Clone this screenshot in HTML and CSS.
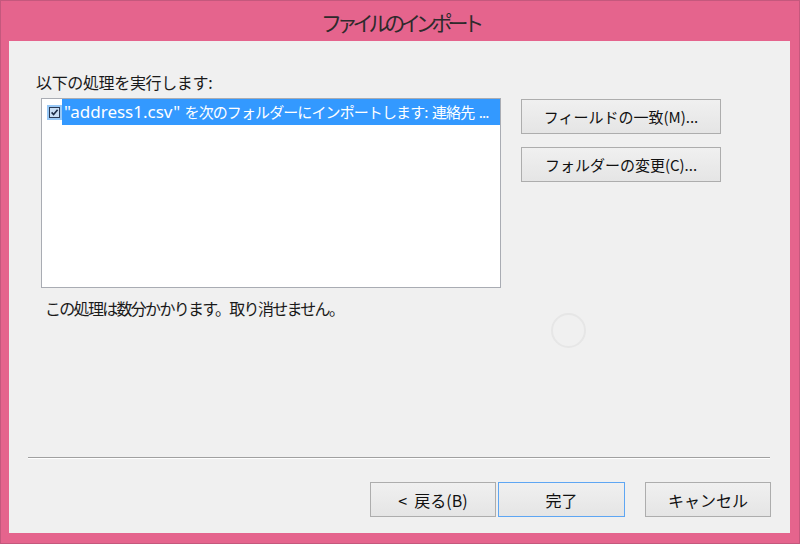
FILE: index.html
```html
<!DOCTYPE html>
<html lang="ja">
<head>
<meta charset="utf-8">
<title>ファイルのインポート</title>
<link rel="stylesheet" href="styles.css">
</head>
<body>
<div class="window">
  <div class="titlebar"><span class="title">ファイルのインポート</span></div>
  <div class="content">
    <div class="main">
      <div class="label">以下の処理を実行します:</div>
      <div class="row">
        <div class="listbox">
          <div class="item">
            <span class="check">
              <svg width="13" height="13" viewBox="0 0 13 13">
                <rect x="1.5" y="1.5" width="10" height="10" fill="#c9def4" stroke="#2a3a55"/>
                <path d="M3.6 6.4 L5.6 8.6 L9.6 3.8" fill="none" stroke="#1d2c46" stroke-width="1.6"/>
              </svg>
            </span>
            <span class="item-text"><span class="fname">"address1.csv"</span> を次のフォルダーにインポートします: 連絡先 ...</span>
          </div>
        </div>
        <div class="side-buttons">
          <button class="btn wide">フィールドの一致(M)...</button>
          <button class="btn wide">フォルダーの変更(C)...</button>
        </div>
      </div>
      <div class="note">この処理は数分かかります。取り消せません。</div>
    </div>
    <div class="spinner"></div>
    <div class="separator"></div>
    <div class="footer">
      <button class="btn back">&lt;&nbsp;&nbsp;戻る(B)</button>
      <button class="btn done">完了</button>
      <button class="btn cancel">キャンセル</button>
    </div>
  </div>
</div>
</body>
</html>
```
FILE: styles.css
```css
html, body {
  margin: 0;
  padding: 0;
}
body {
  width: 800px;
  height: 544px;
  overflow: hidden;
  font-family: "Noto Sans CJK JP", "Noto Sans", sans-serif;
  color: #1a1a1a;
}
.window {
  box-sizing: border-box;
  width: 800px;
  height: 544px;
  background: #e5648d;
  border: 1px solid #c4587d;
  display: flex;
  flex-direction: column;
}
.titlebar {
  height: 40px;
  display: flex;
  align-items: center;
  justify-content: center;
}
.title {
  font-size: 21px;
  letter-spacing: -5.2px;
  color: #2e2a2c;
  line-height: 24px;
  margin-top: 2px;
}
.content {
  position: relative;
  margin: 0 9px 10px 8px;
  flex: 1;
  background: #f0f0f0;
  display: flex;
  flex-direction: column;
  padding-bottom: 16px;
}
.main {
  padding: 30px 0 0 27px;
}
.label {
  font-size: 16px;
  letter-spacing: -0.35px;
  line-height: 22px;
  color: #1a1a1a;
}
.row {
  display: flex;
  gap: 20px;
  margin: 5px 0 0 5px;
}
.listbox {
  box-sizing: border-box;
  width: 460px;
  height: 190px;
  background: #fff;
  border: 1px solid #a9acb3;
}
.item {
  display: flex;
  align-items: center;
  height: 26px;
  padding-left: 5px;
}
.check {
  width: 15px;
  height: 15px;
  background: #98c8f6;
  display: flex;
  align-items: center;
  justify-content: center;
}
.check svg {
  display: block;
}
.item-text {
  flex: 1;
  height: 26px;
  line-height: 26px;
  background: #3399ff;
  color: #fff;
  font-family: "Noto Sans CJK JP", "Noto Sans", sans-serif;
  font-size: 15px;
  padding-left: 2px;
  white-space: nowrap;
  overflow: hidden;
  letter-spacing: -0.9px;
  word-spacing: 2px;
}
.fname {
  font-family: "Noto Sans", "Noto Sans CJK JP", sans-serif;
  font-size: 17px;
  letter-spacing: 0;
}
.side-buttons {
  display: flex;
  flex-direction: column;
  gap: 13px;
  margin-top: 1px;
}
.btn {
  box-sizing: border-box;
  height: 35px;
  border: 1px solid #adadad;
  background: linear-gradient(#f0f0f0, #e5e5e5);
  font-family: "Noto Sans CJK JP", "Noto Sans", sans-serif;
  font-size: 15px;
  color: #111;
  padding: 0;
  margin: 0;
}
.btn.wide {
  width: 200px;
}
.note {
  font-size: 16px;
  line-height: 20px;
  letter-spacing: -1.7px;
  margin: 10px 0 0 9px;
  color: #1a1a1a;
}
.spinner {
  position: absolute;
  left: 542px;
  top: 272px;
  width: 31px;
  height: 31px;
  border: 2px solid #e6e6e6;
  border-radius: 50%;
}
.separator {
  margin: auto 20px 0 19px;
  height: 1px;
  background: #a0a0a0;
  border-bottom: 1px solid #ffffff;
}
.footer {
  display: flex;
  justify-content: flex-end;
  margin-top: 23px;
  padding-right: 19px;
}
.back {
  width: 126px;
  font-size: 16px;
}
.done {
  width: 127px;
  margin-left: 2px;
  border-color: #5ea6f3;
  font-size: 16px;
}
.cancel {
  width: 126px;
  margin-left: 20px;
  font-size: 16px;
}
```
